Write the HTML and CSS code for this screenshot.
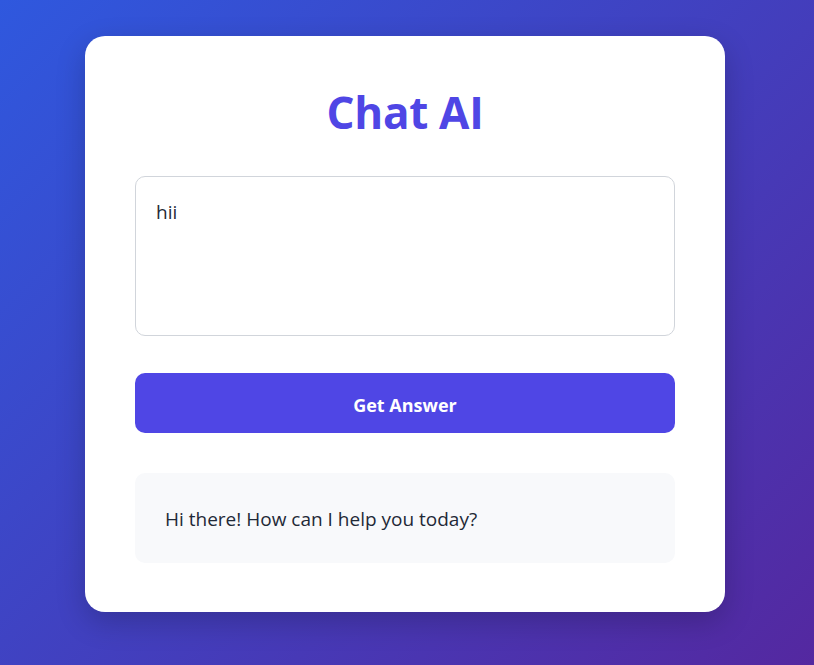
FILE: index.html
```html
<!DOCTYPE html>
<html lang="en">
<head>
<meta charset="utf-8">
<title>Chat AI</title>
<link rel="stylesheet" href="styles.css">
</head>
<body>
<main class="page">
  <section class="card">
    <h1 class="title">Chat AI</h1>
    <textarea class="prompt">hii</textarea>
    <button class="submit" type="button">Get Answer</button>
    <div class="answer">Hi there! How can I help you today?</div>
  </section>
</main>
</body>
</html>
```
FILE: styles.css
```css
html, body {
  margin: 0;
  height: 100%;
}
body {
  background: linear-gradient(135deg, #2f58de 0%, #5428a0 100%);
  font-family: "Segoe UI", "Open Sans", "Noto Sans", sans-serif;
  color: #1f2937;
}
.page {
  display: flex;
  justify-content: center;
  padding: 36px 4px 0 0;
}
.card {
  box-sizing: border-box;
  width: 640px;
  height: 576px;
  background: #ffffff;
  border-radius: 20px;
  padding: 50px;
  box-shadow: 0 10px 30px rgba(0, 0, 0, 0.2);
  display: flex;
  flex-direction: column;
}
.title {
  margin: 0 0 38px;
  font-size: 44px;
  line-height: 52px;
  font-weight: 700;
  color: #4f46e5;
  text-align: center;
  letter-spacing: -0.3px;
}
.prompt {
  box-sizing: border-box;
  flex: none;
  width: 540px;
  height: 160px;
  border: 1px solid #d1d5db;
  border-radius: 10px;
  padding: 21px 20px 20px;
  font-family: inherit;
  font-size: 19px;
  line-height: 1.5;
  color: #1f2937;
  resize: none;
  outline: none;
  margin: 0 0 37px;
}
.submit {
  box-sizing: border-box;
  flex: none;
  height: 60px;
  width: 540px;
  border: none;
  border-radius: 10px;
  background: #4f46e5;
  color: #ffffff;
  font-family: inherit;
  font-size: 18px;
  font-weight: 700;
  margin: 0 0 40px;
  padding: 3px 0 0;
}
.answer {
  box-sizing: border-box;
  flex: none;
  height: 90px;
  background: #f8f9fb;
  border-radius: 10px;
  padding: 2px 30px 0;
  display: flex;
  align-items: center;
  font-size: 19px;
  color: #1f2937;
}
```
